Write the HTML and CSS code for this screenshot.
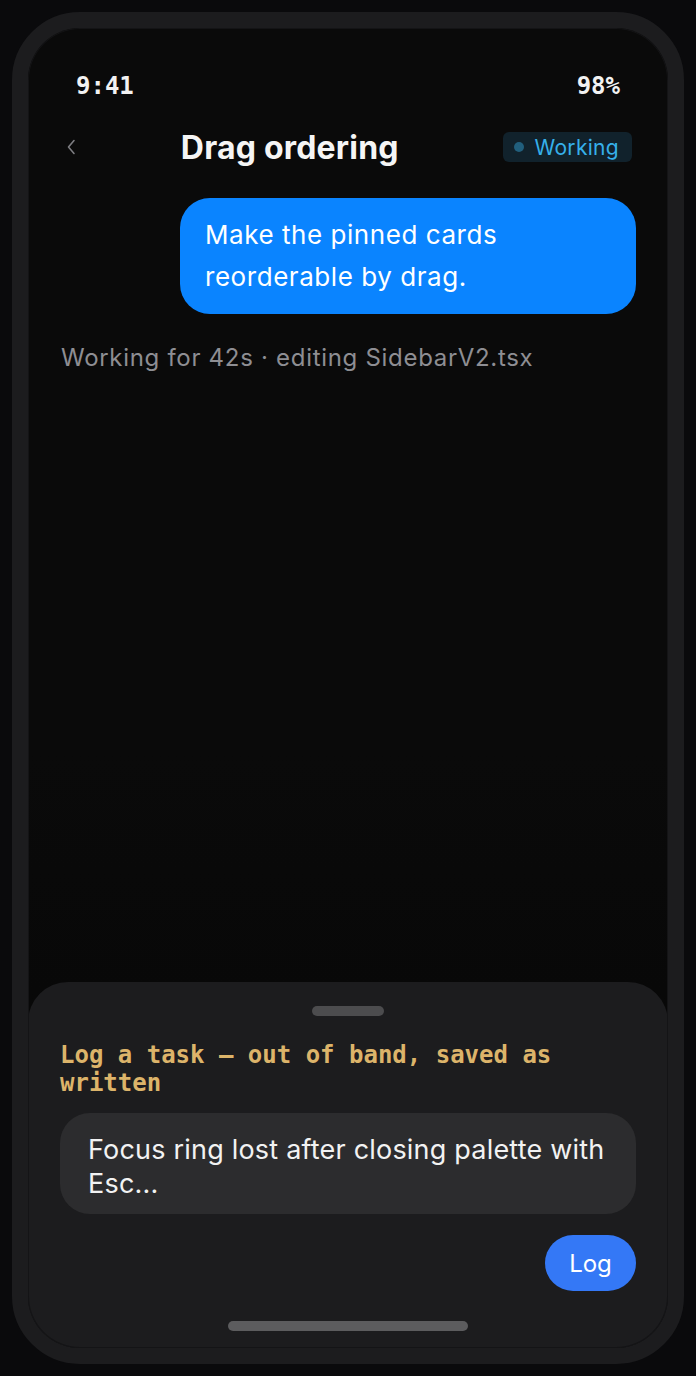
FILE: index.html
```html
<!DOCTYPE html>
<html lang="en">
  <head>
    <meta charset="UTF-8" />
    <meta name="viewport" content="width=device-width, initial-scale=1.0" />
    <title>Drag ordering</title>
    <link rel="stylesheet" href="styles.css">
  </head>
  <body>
    <div class="phone">
      <div class="screen">
        <div class="status-bar">
          <span>9:41</span>
          <span>98%</span>
        </div>

        <div class="header">
          <button class="back" aria-label="Back">
            <svg width="10" height="16" viewBox="0 0 10 16">
              <polyline points="8,1.5 2.5,8 8,14.5" fill="none" stroke="#7c7c80" stroke-width="1.6" stroke-linecap="round" stroke-linejoin="round" />
            </svg>
          </button>
          <h1 class="title">Drag ordering</h1>
          <span class="badge"><span class="dot"></span>Working</span>
        </div>

        <div class="chat">
          <div class="bubble">Make the pinned cards reorderable by drag.</div>
          <p class="activity">Working for 42s · editing SidebarV2.tsx</p>
        </div>

        <div class="sheet">
          <div class="handle"></div>
          <h2 class="sheet-title">Log a task — out of band, saved as written</h2>
          <div class="task-input">Focus ring lost after closing palette with Esc...</div>
          <div class="actions">
            <button class="log-button">Log</button>
          </div>
          <div class="home-indicator"></div>
        </div>
      </div>
    </div>
  </body>
</html>
```

FILE: styles.css
```css
body {
  margin: 0;
  padding: 12px;
  background-color: #0a0a0c;
  font-family: Inter, "Noto Sans", sans-serif;
}
.phone {
  width: 640px;
  height: 1320px;
  border: 16px solid #1c1c1e;
  border-radius: 68px;
  background-color: #1c1c1e;
}
.screen {
  position: relative;
  height: 100%;
  border-radius: 52px;
  overflow: hidden;
  display: flex;
  flex-direction: column;
  background: linear-gradient(#0a0a0a 55%, #050505);
}
/* faint screen edge that shows over the sheet */
.screen::after {
  content: "";
  position: absolute;
  inset: 0;
  border-radius: 52px;
  box-shadow: inset 0 0 0 1px #141416;
  pointer-events: none;
}
.status-bar {
  display: flex;
  justify-content: space-between;
  padding: 43px 48px 0 48px;
  font-family: "DejaVu Sans Mono", monospace;
  font-weight: bold;
  font-size: 24px;
  line-height: 30px;
  color: #f2f2f2;
}
.header {
  display: flex;
  align-items: center;
  height: 40px;
  padding: 26px 36px 0 32px;
}
.back {
  display: flex;
  width: 17px;
  padding: 0 0 0 6px;
  background: none;
  border: none;
}
.title {
  flex: 1;
  margin: 0;
  text-align: center;
  font-size: 32px;
  font-weight: 700;
  letter-spacing: 0.2px;
  color: #f5f5f5;
}
.badge {
  display: flex;
  align-items: center;
  gap: 11px;
  height: 30px;
  padding: 0 13px 0 11px;
  border-radius: 6px;
  background-color: #11222c;
  color: #36b0ea;
  font-size: 21px;
  letter-spacing: 0.3px;
}
.dot {
  width: 10px;
  height: 10px;
  border-radius: 50%;
  background-color: #215f7d;
}
.chat {
  flex: 1;
  display: flex;
  flex-direction: column;
  padding: 31px 32px 0 33px;
}
.bubble {
  align-self: flex-end;
  width: 406px;
  padding: 16px 25px 16px 25px;
  border-radius: 30px;
  background-color: #0a84ff;
  color: #fff;
  font-size: 26px;
  line-height: 42px;
  letter-spacing: 0.55px;
}
.activity {
  margin: 24px 0 0;
  font-size: 24px;
  line-height: 40px;
  letter-spacing: 0.7px;
  color: #8e8e93;
}
.sheet {
  background-color: #1c1c1e;
  border-radius: 40px 40px 0 0;
  padding: 24px 32px 17px;
  display: flex;
  flex-direction: column;
}
.handle {
  align-self: center;
  width: 72px;
  height: 10px;
  border-radius: 5px;
  background-color: #4c4c4e;
}
.sheet-title {
  margin: 25px 0 0;
  font-family: "DejaVu Sans Mono", monospace;
  font-weight: bold;
  font-size: 24px;
  line-height: 28px;
  color: #dcb46a;
}
.task-input {
  margin-top: 16px;
  padding: 20px 28px 13px;
  border-radius: 30px;
  background-color: #2c2c2e;
  color: #f2f2f2;
  font-size: 27px;
  line-height: 34px;
  letter-spacing: 0.2px;
}
.actions {
  display: flex;
  justify-content: flex-end;
  margin-top: 21px;
}
.log-button {
  width: 91px;
  height: 56px;
  border: none;
  border-radius: 28px;
  background-color: #3478f6;
  color: #fff;
  font-family: Inter, sans-serif;
  font-size: 24px;
}
.home-indicator {
  align-self: center;
  margin-top: 30px;
  width: 240px;
  height: 10px;
  border-radius: 5px;
  background-color: #5c5c5e;
}
```
